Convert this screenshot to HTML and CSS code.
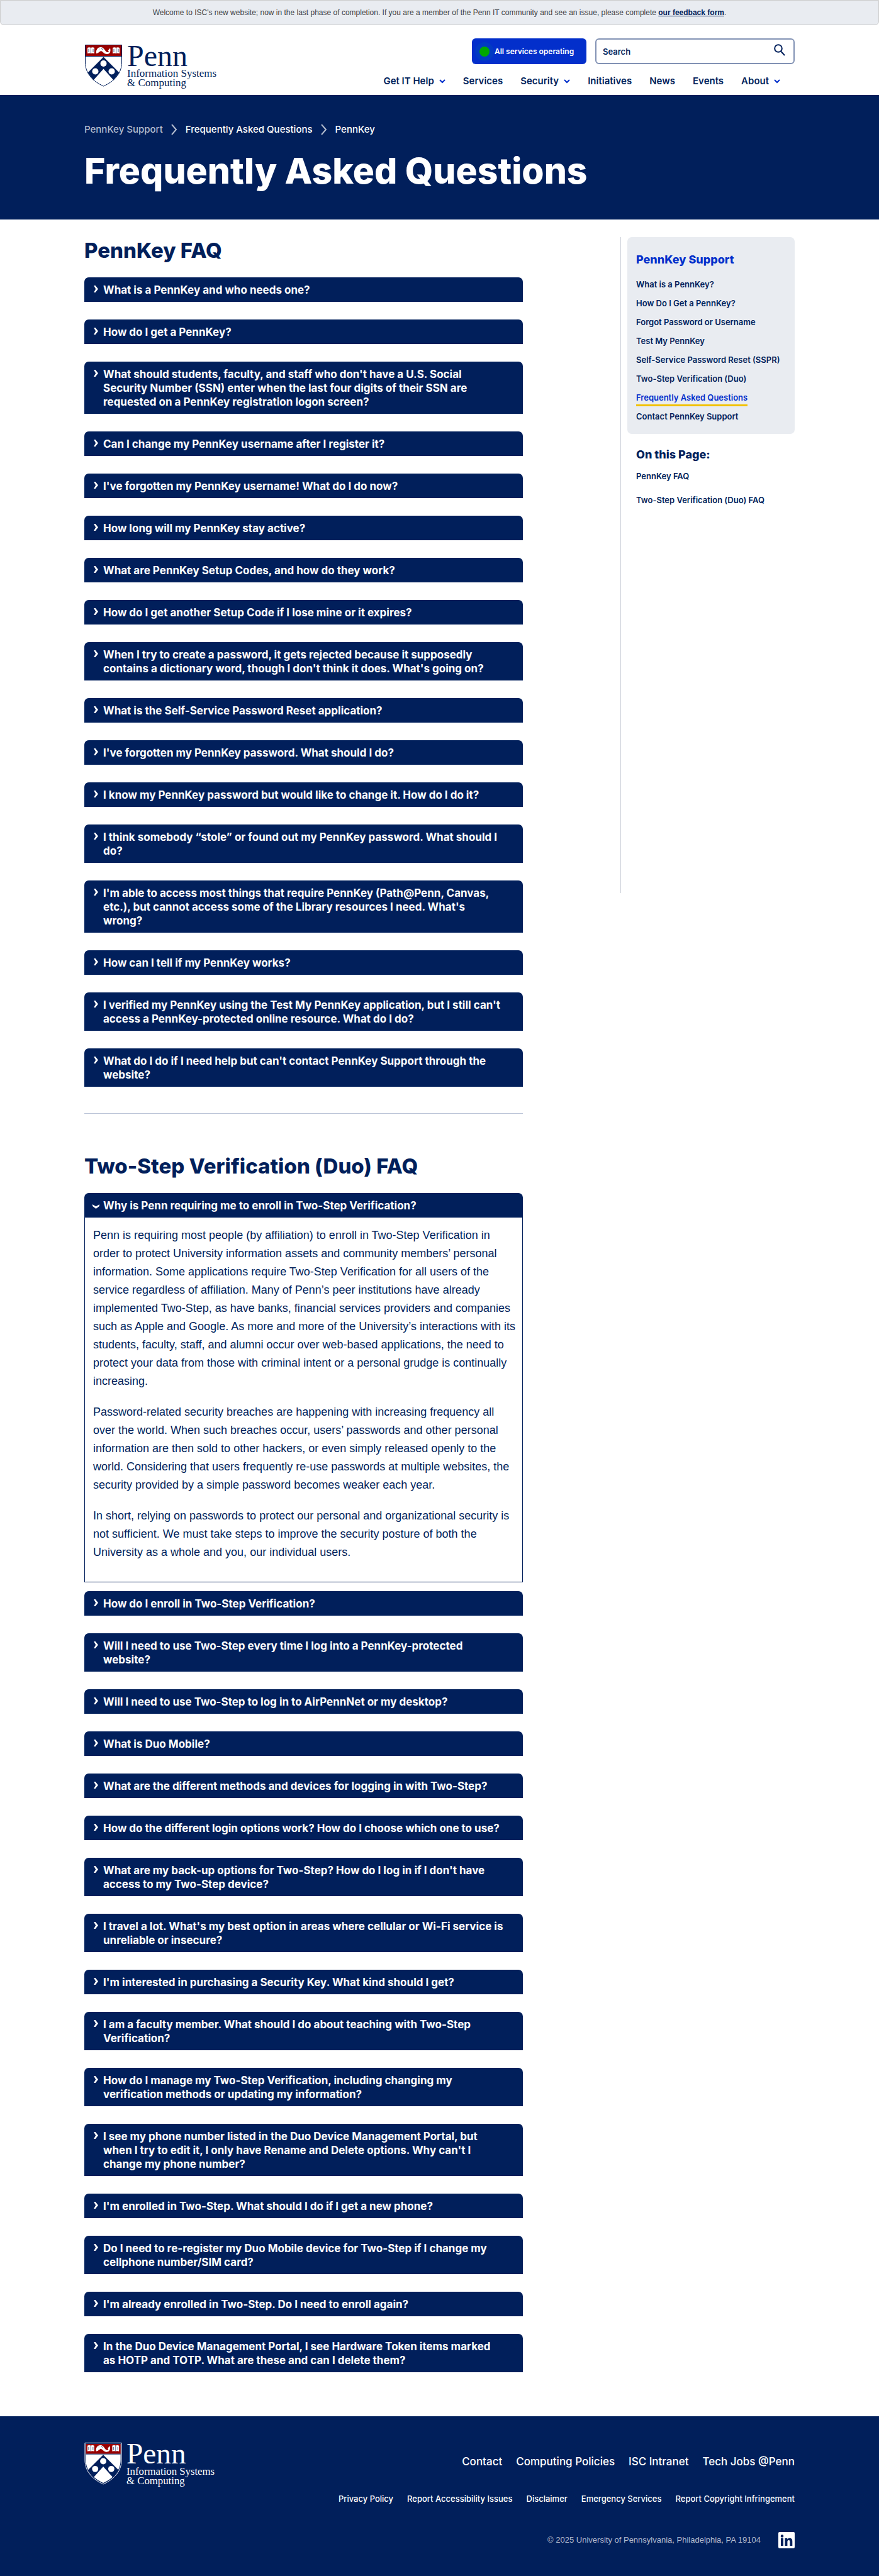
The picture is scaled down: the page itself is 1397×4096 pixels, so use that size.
FILE: index.html
```html
<!DOCTYPE html>
<html lang="en">
<head>
<meta charset="utf-8">
<meta name="viewport" content="width=device-width, initial-scale=1">
<title>Frequently Asked Questions | Penn Information Systems &amp; Computing</title>
<link rel="stylesheet" href="styles.css">
</head>
<body>
<div class="notice">
  <p>Welcome to ISC's new website; now in the last phase of completion. If you are a member of the Penn IT community and see an issue, please complete <a href="#">our feedback form</a>.</p>
</div>

<header class="site-header">
  <div class="container header-inner">
    <a class="logo" href="#" aria-label="Penn Information Systems and Computing">
      <svg class="logo-svg" viewBox="0 -10 212 80" width="212" height="80">
        <path d="M1.500.500H59.500V28C59.500 47 46 59 30.500 66C15 59 1.500 47 1.500 28Z" fill="#fff" stroke="#011f5b"/>
        <path d="M2 1H59V18H2Z" fill="#990000"/>
        <path d="M2 18.500H59" stroke="#011f5b"/>
        <path d="M30.500 19.500L55.500 44.500L46.500 56.500L30.500 38.500L14.500 56.500L5.500 44.500Z" fill="#011f5b"/>
        <g fill="#fff">
          <circle cx="30.500" cy="30" r="5"/><circle cx="17.500" cy="42.500" r="5"/><circle cx="43.500" cy="42.500" r="5"/>
          <path d="M5 5C7 4 9 4 10.500 5C12 4 14 4 16 5V14C14 13.300 12 13.300 10.500 14C9 13.300 7 13.300 5 14Z"/>
          <path d="M45 5C47 4 49 4 50.500 5C52 4 54 4 56 5V14C54 13.300 52 13.300 50.500 14C49 13.300 47 13.300 45 14Z"/>
          <path d="M19 14C18 9 21 4 26 4C32 4 33 12 37 12C39 12 39.500 10 37.500 9.500L41 5.500C42 9 42 15 36 15C31 15 29 10 26 10C25 12 23 10.500 22.500 13Z"/>
        </g>
        <path d="M10.500 5V14M50.500 5V14M23 7H24M27 6L30 8M7 7V12M14 7V12M47 7V12M54 7V12" stroke="#011f5b" stroke-width=".700" fill="none"/>
        <g fill="#011f5b" class="logo-words">
          <text x="68" y="34" class="logo-penn">Penn</text>
          <text x="68" y="51" class="logo-unit">Information Systems</text>
          <text x="68" y="66" class="logo-unit">&amp; Computing</text>
        </g>
      </svg>
    </a>
    <div class="header-tools">
      <div class="tool-row">
        <a class="status" href="#"><span class="status-dot"></span>All services operating</a>
        <form class="search" role="search">
          <input type="search" aria-label="Search" placeholder="Search">
          <button type="button" aria-label="Submit search">
            <svg viewBox="0 0 18 19" width="18" height="19"><circle cx="7" cy="7" r="5.800"/><path d="M11 11.500L17 18"/></svg>
          </button>
        </form>
      </div>
      <nav class="main-nav" aria-label="Main">
        <a href="#">Get IT Help <svg viewBox="0 0 10 7" width="10" height="7"><path d="M1 1L5 5L9 1"/></svg></a>
        <a href="#">Services</a>
        <a href="#">Security <svg viewBox="0 0 10 7" width="10" height="7"><path d="M1 1L5 5L9 1"/></svg></a>
        <a href="#">Initiatives</a>
        <a href="#">News</a>
        <a href="#">Events</a>
        <a href="#">About <svg viewBox="0 0 10 7" width="10" height="7"><path d="M1 1L5 5L9 1"/></svg></a>
      </nav>
    </div>
  </div>
</header>

<section class="hero">
  <div class="container">
    <nav class="crumbs" aria-label="Breadcrumb">
      <a class="crumb-root" href="#">PennKey Support</a>
      <svg viewBox="0 0 10 18" width="10" height="18"><path d="M1 1L8 9L1 17"/></svg>
      <a href="#">Frequently Asked Questions</a>
      <svg viewBox="0 0 10 18" width="10" height="18"><path d="M1 1L8 9L1 17"/></svg>
      <a href="#">PennKey</a>
    </nav>
    <h1>Frequently Asked Questions</h1>
  </div>
</section>

<div class="container page">
  <main class="content">
    <section class="faq" id="pennkey">
      <h2>PennKey FAQ</h2>
      <details><summary>What is a PennKey and who needs one?</summary></details>
      <details><summary>How do I get a PennKey?</summary></details>
      <details><summary>What should students, faculty, and staff who don't have a U.S. Social Security Number (SSN) enter when the last four digits of their SSN are requested on a PennKey registration logon screen?</summary></details>
      <details><summary>Can I change my PennKey username after I register it?</summary></details>
      <details><summary>I've forgotten my PennKey username! What do I do now?</summary></details>
      <details><summary>How long will my PennKey stay active?</summary></details>
      <details><summary>What are PennKey Setup Codes, and how do they work?</summary></details>
      <details><summary>How do I get another Setup Code if I lose mine or it expires?</summary></details>
      <details><summary>When I try to create a password, it gets rejected because it supposedly contains a dictionary word, though I don't think it does. What's going on?</summary></details>
      <details><summary>What is the Self-Service Password Reset application?</summary></details>
      <details><summary>I've forgotten my PennKey password. What should I do?</summary></details>
      <details><summary>I know my PennKey password but would like to change it. How do I do it?</summary></details>
      <details><summary>I think somebody “stole” or found out my PennKey password. What should I do?</summary></details>
      <details><summary>I'm able to access most things that require PennKey (Path@Penn, Canvas, etc.), but cannot access some of the Library resources I need. What's wrong?</summary></details>
      <details><summary>How can I tell if my PennKey works?</summary></details>
      <details><summary>I verified my PennKey using the Test My PennKey application, but I still can't access a PennKey-protected online resource. What do I do?</summary></details>
      <details><summary>What do I do if I need help but can't contact PennKey Support through the website?</summary></details>
    </section>
    <hr>
    <section class="faq" id="duo">
      <h2>Two-Step Verification (Duo) FAQ</h2>
      <details open>
        <summary>Why is Penn requiring me to enroll in Two-Step Verification?</summary>
        <div class="answer">
          <p>Penn is requiring most people (by affiliation) to enroll in Two-Step Verification in order to protect University information assets and community members’ personal information. Some applications require Two-Step Verification for all users of the service regardless of affiliation. Many of Penn’s peer institutions have already implemented Two-Step, as have banks, financial services providers and companies such as Apple and Google. As more and more of the University’s interactions with its students, faculty, staff, and alumni occur over web-based applications, the need to protect your data from those with criminal intent or a personal grudge is continually increasing.</p>
          <p>Password-related security breaches are happening with increasing frequency all over the world. When such breaches occur, users’ passwords and other personal information are then sold to other hackers, or even simply released openly to the world. Considering that users frequently re-use passwords at multiple websites, the security provided by a simple password becomes weaker each year.</p>
          <p>In short, relying on passwords to protect our personal and organizational security is not sufficient. We must take steps to improve the security posture of both the University as a whole and you, our individual users.</p>
        </div>
      </details>
      <details><summary>How do I enroll in Two-Step Verification?</summary></details>
      <details><summary>Will I need to use Two-Step every time I log into a PennKey-protected website?</summary></details>
      <details><summary>Will I need to use Two-Step to log in to AirPennNet or my desktop?</summary></details>
      <details><summary>What is Duo Mobile?</summary></details>
      <details><summary>What are the different methods and devices for logging in with Two-Step?</summary></details>
      <details><summary>How do the different login options work? How do I choose which one to use?</summary></details>
      <details><summary>What are my back-up options for Two-Step? How do I log in if I don't have access to my Two-Step device?</summary></details>
      <details><summary>I travel a lot. What's my best option in areas where cellular or Wi-Fi service is unreliable or insecure?</summary></details>
      <details><summary>I'm interested in purchasing a Security Key. What kind should I get?</summary></details>
      <details><summary>I am a faculty member. What should I do about teaching with Two-Step Verification?</summary></details>
      <details><summary>How do I manage my Two-Step Verification, including changing my verification methods or updating my information?</summary></details>
      <details><summary>I see my phone number listed in the Duo Device Management Portal, but when I try to edit it, I only have Rename and Delete options. Why can't I change my phone number?</summary></details>
      <details><summary>I'm enrolled in Two-Step. What should I do if I get a new phone?</summary></details>
      <details><summary>Do I need to re-register my Duo Mobile device for Two-Step if I change my cellphone number/SIM card?</summary></details>
      <details><summary>I'm already enrolled in Two-Step. Do I need to enroll again?</summary></details>
      <details><summary>In the Duo Device Management Portal, I see Hardware Token items marked as HOTP and TOTP. What are these and can I delete them?</summary></details>
    </section>
  </main>

  <aside class="sidebar">
    <nav class="side-card" aria-label="PennKey Support">
      <h3><a href="#">PennKey Support</a></h3>
      <ul>
        <li><a href="#">What is a PennKey?</a></li>
        <li><a href="#">How Do I Get a PennKey?</a></li>
        <li><a href="#">Forgot Password or Username</a></li>
        <li><a href="#">Test My PennKey</a></li>
        <li><a href="#">Self-Service Password Reset (SSPR)</a></li>
        <li><a href="#">Two-Step Verification (Duo)</a></li>
        <li><a class="current" href="#">Frequently Asked Questions</a></li>
        <li><a href="#">Contact PennKey Support</a></li>
      </ul>
    </nav>
    <nav class="on-page" aria-label="On this page">
      <h3>On this Page:</h3>
      <ul>
        <li><a href="#pennkey">PennKey FAQ</a></li>
        <li><a href="#duo">Two-Step Verification (Duo) FAQ</a></li>
      </ul>
    </nav>
  </aside>
</div>

<footer class="site-footer">
  <div class="container footer-inner">
    <a class="logo" href="#" aria-label="Penn Information Systems and Computing">
      <svg class="logo-svg" viewBox="0 -10 212 81" width="209" height="80">
        <path d="M1 .500H60V28C60 47.500 46 60 30.500 67C15 60 1 47.500 1 28Z" fill="#011f5b" stroke="#fff"/>
        <path d="M2.500 2H58.500V28C58.500 46 45.500 58.500 30.500 65C15.500 58.500 2.500 46 2.500 28Z" fill="#fff"/>
        <path d="M2.500 2H58.500V18H2.500Z" fill="#990000"/>
        <path d="M2.500 18.500H58.500" stroke="#011f5b"/>
        <path d="M30.500 19.500L55.500 44.500L46.500 56.500L30.500 38.500L14.500 56.500L5.500 44.500Z" fill="#011f5b"/>
        <g fill="#fff">
          <circle cx="30.500" cy="30" r="5"/><circle cx="17.500" cy="42.500" r="5"/><circle cx="43.500" cy="42.500" r="5"/>
          <path d="M5 5C7 4 9 4 10.500 5C12 4 14 4 16 5V14C14 13.300 12 13.300 10.500 14C9 13.300 7 13.300 5 14Z"/>
          <path d="M45 5C47 4 49 4 50.500 5C52 4 54 4 56 5V14C54 13.300 52 13.300 50.500 14C49 13.300 47 13.300 45 14Z"/>
          <path d="M19 14C18 9 21 4 26 4C32 4 33 12 37 12C39 12 39.500 10 37.500 9.500L41 5.500C42 9 42 15 36 15C31 15 29 10 26 10C25 12 23 10.500 22.500 13Z"/>
        </g>
        <path d="M10.500 5V14M50.500 5V14M23 7H24M27 6L30 8M7 7V12M14 7V12M47 7V12M54 7V12" stroke="#011f5b" stroke-width=".700" fill="none"/>
        <g fill="#fff" class="logo-words">
          <text x="68" y="34" class="logo-penn">Penn</text>
          <text x="68" y="52" class="logo-unit">Information Systems</text>
          <text x="68" y="67" class="logo-unit">&amp; Computing</text>
        </g>
      </svg>
    </a>
    <div class="footer-links">
      <nav class="footer-main" aria-label="Footer">
        <a href="#">Contact</a><a href="#">Computing Policies</a><a href="#">ISC Intranet</a><a href="#">Tech Jobs @Penn</a>
      </nav>
      <nav class="footer-legal" aria-label="Legal">
        <a href="#">Privacy Policy</a><a href="#">Report Accessibility Issues</a><a href="#">Disclaimer</a><a href="#">Emergency Services</a><a href="#">Report Copyright Infringement</a>
      </nav>
      <div class="footer-end">
        <p>© 2025 University of Pennsylvania, Philadelphia, PA 19104</p>
        <a href="#" aria-label="LinkedIn">
          <svg viewBox="0 0 26 26" width="26" height="26"><rect width="26" height="26" rx="2" fill="#fff"/><g fill="#011f5b"><circle cx="6" cy="6.500" r="2.300"/><rect x="4" y="10" width="4" height="12"/><path d="M10.500 10H14.300V11.700C15 10.500 16.300 9.700 18 9.700C21.500 9.700 22.300 12 22.300 15.200V22H18.400V16C18.400 14.500 18.300 13 16.500 13C14.700 13 14.400 14.400 14.400 15.900V22H10.500Z"/></g></svg>
        </a>
      </div>
    </div>
  </div>
</footer>
</body>
</html>
```
FILE: styles.css
```css
:root {
  --navy: #011f5b;
  --blue: #032fcb;
  --mist: #e9ecf1;
  --gold: #f2c100;
  --text-font: "Liberation Sans", Arial, sans-serif;
  --ui-font: Inter, "Liberation Sans", sans-serif;
}

* { box-sizing: border-box; }

body {
  margin: 0;
  background: #fff;
  color: var(--navy);
  font-family: var(--text-font);
  font-size: 18px;
}

h1, h2, h3, p, ul { margin: 0; padding: 0; }
ul { list-style: none; }
a { color: inherit; text-decoration: none; }
svg { display: block; }

.container {
  width: 100%;
  max-width: 1177px;
  margin: 0 auto;
  padding: 0 24px;
}

/* Notice bar */
.notice {
  padding: 9px 16px;
  border: 1px solid #ccc;
  border-radius: 0 0 6px 6px;
  background: var(--mist);
  color: #3d3f45;
  font-size: 12px;
  line-height: 20px;
  text-align: center;
}
.notice a {
  color: var(--navy);
  font-weight: 700;
  text-decoration: underline;
}

/* Header */
.header-inner {
  display: flex;
  justify-content: space-between;
  padding-top: 21px;
  padding-bottom: 10px;
}
.logo-svg { overflow: visible; }
.logo-words { font-family: "Liberation Serif", "Times New Roman", serif; }
.logo-penn { font-size: 48px; }
.logo-unit { font-size: 17px; }

.tool-row {
  display: flex;
  justify-content: flex-end;
  gap: 14px;
}
.status {
  display: flex;
  align-items: center;
  gap: 8px;
  width: 182px;
  height: 41px;
  padding-left: 12px;
  border-radius: 6px;
  background: var(--blue);
  color: #fff;
  font: 600 12px/20px var(--ui-font);
}
.status-dot {
  width: 16px;
  height: 16px;
  border-radius: 50%;
  background: #00a800;
  box-shadow: 0 0 0 7px rgba(0, 90, 170, .25);
}
.search {
  display: flex;
  align-items: center;
  width: 317px;
  height: 41px;
  padding: 0 13px 0 10px;
  border: 2px solid #8292b4;
  border-radius: 6px;
}
.search input {
  flex: 1;
  min-width: 0;
  padding: 0;
  border: 0;
  outline: 0;
  background: none;
  color: var(--navy);
  font: 600 13px/20px var(--ui-font);
}
.search input::placeholder { color: var(--navy); opacity: 1; }
.search button {
  padding: 0 0 4px;
  border: 0;
  background: none;
}
.search svg { fill: none; stroke: var(--navy); stroke-width: 2; }

.main-nav {
  display: flex;
  justify-content: flex-end;
  gap: 28px;
  margin-top: 15px;
  padding-right: 23px;
  font: 600 15px/24px var(--ui-font);
}
.main-nav a {
  display: flex;
  align-items: center;
  gap: 8px;
}
.main-nav svg { fill: none; stroke: var(--blue); stroke-width: 2; }

/* Page banner */
.hero {
  padding: 43px 0 43px;
  background: var(--navy);
  color: #fff;
}
.crumbs {
  display: flex;
  align-items: center;
  gap: 13px;
  font: 500 15px/24px var(--ui-font);
}
.crumbs svg { fill: none; stroke: #b3bcce; stroke-width: 2; }
.crumb-root { color: #b3bcce; }
.hero h1 {
  margin-top: 20px;
  font: 800 57px/68px var(--ui-font);
}

/* Page columns */
.page {
  display: flex;
  justify-content: space-between;
  align-items: flex-start;
  gap: 40px;
  padding-top: 28px;
  padding-bottom: 42px;
}
.content { flex: 0 1 697px; }

h2 {
  margin-bottom: 22px;
  font: 800 33px/42px var(--ui-font);
}
hr {
  height: 1px;
  margin: 42px 0 62px;
  border: 0;
  background: #bcc5d8;
}

/* Accordions */
details { margin-bottom: 28px; }
details[open] { margin-bottom: 14px; }
summary {
  display: flex;
  gap: 4px;
  padding: 9px 29px 8px 11px;
  border-radius: 7px 7px 0 0;
  background: var(--navy);
  color: #fff;
  font: 700 17px/22px var(--ui-font);
  list-style: none;
  cursor: pointer;
}
summary::-webkit-details-marker { display: none; }
summary::before {
  content: "";
  flex: none;
  width: 7px;
  height: 11px;
  margin: 4px;
  background: #fff;
  clip-path: polygon(0 0, 38% 0, 100% 50%, 38% 100%, 0 100%, 45% 50%);
}
details[open] > summary::before {
  margin-top: 7px;
  transform: rotate(90deg);
}
.answer {
  padding: 14px 8px 32px 13px;
  border: 1px solid var(--navy);
  border-top: 0;
  line-height: 29px;
}
.answer p + p { margin-top: 20px; }

/* Sidebar */
.sidebar {
  flex: none;
  width: 277px;
  min-height: 1043px;
  padding-left: 10px;
  border-left: 1px solid #cdd1d9;
  font: 600 13px/16px var(--ui-font);
}
.side-card {
  padding: 24px 14px 20px;
  border-radius: 7px;
  background: var(--mist);
}
h3 { font: 800 18px/24px var(--ui-font); }
.side-card h3 { color: var(--blue); }
.side-card ul {
  display: grid;
  gap: 14px;
  margin-top: 19px;
}
.side-card li { height: 16px; }
.side-card .current {
  display: inline-block;
  padding-bottom: 3px;
  border-bottom: 3px solid var(--gold);
  color: var(--blue);
}
.on-page { padding: 21px 14px 0; }
.on-page ul {
  display: grid;
  gap: 22px;
  margin-top: 14px;
}

/* Footer */
.site-footer {
  padding: 32px 0 44px;
  background: var(--navy);
  color: #fff;
}
.footer-inner {
  display: flex;
  justify-content: space-between;
}
.footer-links {
  display: flex;
  flex-direction: column;
  align-items: flex-end;
  padding-top: 28px;
}
.footer-links nav { display: flex; gap: 22px; }
.footer-main { font: 500 17px/24px var(--ui-font); }
.footer-legal {
  margin-top: 37px;
  font: 500 13px/20px var(--ui-font);
}
.footer-end {
  display: flex;
  align-items: center;
  gap: 28px;
  margin-top: 43px;
  color: #b3bcce;
  font-size: 13px;
  line-height: 20px;
}
```
